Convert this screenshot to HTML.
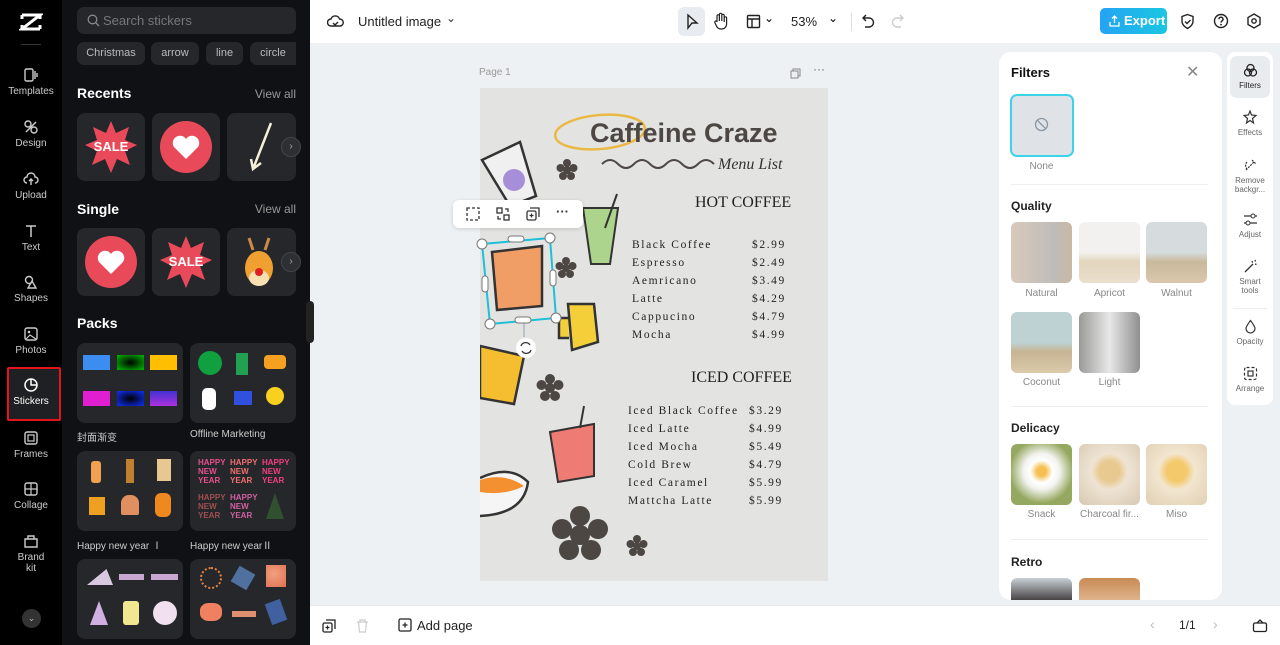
<!DOCTYPE html>
<html><head><meta charset="utf-8"><style>
*{box-sizing:border-box;margin:0;padding:0}
body{width:1280px;height:645px;overflow:hidden;font-family:"Liberation Sans","Noto Sans CJK SC",sans-serif;background:#eef1f4;position:relative}
.a{position:absolute}
.nav{left:0;top:0;width:62px;height:645px;background:#000}
.ni{position:absolute;left:0;width:62px;text-align:center;color:#ccc;font-size:10px}
.ni svg{display:block;margin:0 auto 3px}
.panel{left:62px;top:0;width:248px;height:645px;background:#101114}
.card{position:absolute;background:#26272b;border-radius:8px}
.chip{position:absolute;top:42px;height:23px;background:#26272b;border-radius:7px;color:#bbb;font-size:11px;line-height:23px;text-align:center}
.h{position:absolute;color:#fff;font-weight:bold;font-size:14px}
.va{position:absolute;right:14px;color:#999;font-size:12px}
.lbl{position:absolute;color:#ccc;font-size:10px}
.top{left:310px;top:0;width:970px;height:44px;background:#fff;border-bottom:1px solid #eee}
.bot{left:310px;top:605px;width:970px;height:40px;background:#fff;border-top:1px solid #e6e6e6}
.page{left:480px;top:88px;width:348px;height:493px;background:#e3e3e2}
.menu{position:absolute;font-family:"Liberation Serif",serif;font-size:11.5px;letter-spacing:1.6px;color:#222}
.fp{left:999px;top:52px;width:223px;height:548px;background:#fff;border-radius:12px;overflow:hidden}
.th{position:absolute;width:61px;height:61px;border-radius:6px}
.tl{position:absolute;width:61px;text-align:center;font-size:10px;color:#888}
.sec{position:absolute;left:12px;font-size:12px;font-weight:bold;color:#222}
.rt{left:1227px;top:52px;width:46px;height:353px;background:#fff;border-radius:8px}
.ri{position:absolute;left:0;width:46px;text-align:center;font-size:8px;color:#666;line-height:9px}
.ri svg{display:block;margin:0 auto 3px}
</style></head><body>

<div class="a nav">
 <svg class="a" style="left:19px;top:12px" width="24" height="20" viewBox="0 0 24 20"><path d="M3 3h18L3 17h18M3 3v4M21 3v4M3 17v-4M21 17v-4" stroke="#fff" stroke-width="3" fill="none"/></svg>
 <div class="a" style="left:21px;top:44px;width:20px;height:1px;background:#333"></div>
 <div class="ni" style="top:67px"><svg width="16" height="16" viewBox="0 0 16 16"><rect x="2" y="2" width="8" height="12" rx="1.5" stroke="#ccc" fill="none" stroke-width="1.4"/><path d="M12 4v8M14 6v4" stroke="#ccc" stroke-width="1.4"/></svg>Templates</div>
 <div class="ni" style="top:119px"><svg width="16" height="16" viewBox="0 0 16 16"><circle cx="5" cy="5" r="3" stroke="#ccc" fill="none" stroke-width="1.4"/><circle cx="11" cy="11" r="3" stroke="#ccc" fill="none" stroke-width="1.4"/><path d="M3 13L13 3" stroke="#ccc" stroke-width="1.4"/></svg>Design</div>
 <div class="ni" style="top:171px"><svg width="16" height="16" viewBox="0 0 16 16"><path d="M4 12a3 3 0 010-6 4 4 0 018 0 3 3 0 010 6M8 8v6M6 10l2-2 2 2" stroke="#ccc" fill="none" stroke-width="1.4"/></svg>Upload</div>
 <div class="ni" style="top:223px"><svg width="16" height="16" viewBox="0 0 16 16"><path d="M3 3h10M8 3v11" stroke="#ccc" stroke-width="1.5"/></svg>Text</div>
 <div class="ni" style="top:274px"><svg width="16" height="16" viewBox="0 0 16 16"><circle cx="6" cy="6" r="3.5" stroke="#ccc" fill="none" stroke-width="1.4"/><path d="M9 7l4 7H5z" stroke="#ccc" fill="none" stroke-width="1.4"/></svg>Shapes</div>
 <div class="ni" style="top:326px"><svg width="16" height="16" viewBox="0 0 16 16"><rect x="2" y="2" width="12" height="12" rx="2" stroke="#ccc" fill="none" stroke-width="1.4"/><circle cx="6" cy="6" r="1.3" fill="#ccc"/><path d="M3 13l4-4 6 4" stroke="#ccc" fill="none" stroke-width="1.2"/></svg>Photos</div>
 <div class="a" style="left:7px;top:367px;width:54px;height:54px;border:2px solid #e3151b;background:#1f2023;border-radius:2px"></div>
 <div class="ni" style="top:377px;color:#fff"><svg width="16" height="16" viewBox="0 0 16 16"><path d="M8 2a6 6 0 106 6A6 6 0 008 2zM8 2v6h6" stroke="#fff" fill="none" stroke-width="1.5"/></svg>Stickers</div>
 <div class="ni" style="top:430px"><svg width="16" height="16" viewBox="0 0 16 16"><rect x="2" y="2" width="12" height="12" rx="2" stroke="#ccc" fill="none" stroke-width="1.4"/><rect x="5" y="5" width="6" height="6" stroke="#ccc" fill="none" stroke-width="1.2"/></svg>Frames</div>
 <div class="ni" style="top:481px"><svg width="16" height="16" viewBox="0 0 16 16"><rect x="2" y="2" width="12" height="12" rx="2" stroke="#ccc" fill="none" stroke-width="1.4"/><path d="M8 2v12M2 8h12" stroke="#ccc" stroke-width="1.2"/></svg>Collage</div>
 <div class="ni" style="top:533px"><svg width="16" height="16" viewBox="0 0 16 16"><path d="M2 6h12v8H2zM5 6V3h6v3" stroke="#ccc" fill="none" stroke-width="1.4"/></svg>Brand<br>kit</div>
 <div class="a" style="left:22px;top:609px;width:19px;height:19px;border-radius:50%;background:#333;color:#bbb;font-size:9px;text-align:center;line-height:19px">⌄</div>
</div>

<div class="a panel">
 <div class="a" style="left:15px;top:7px;width:219px;height:27px;background:#26272b;border-radius:7px;color:#777;font-size:13px;line-height:27px;padding-left:26px">Search stickers
  <svg class="a" style="left:10px;top:7px" width="13" height="13" viewBox="0 0 13 13"><circle cx="5.5" cy="5.5" r="4.3" stroke="#888" fill="none" stroke-width="1.3"/><path d="M9 9l3 3" stroke="#888" stroke-width="1.3"/></svg></div>
 <div class="chip" style="left:15px;width:68px">Christmas</div>
 <div class="chip" style="left:89px;width:48px">arrow</div>
 <div class="chip" style="left:144px;width:37px">line</div>
 <div class="chip" style="left:188px;width:46px;border-radius:7px 0 0 7px">circle</div>
 <div class="h" style="left:15px;top:85px">Recents</div><div class="va" style="top:87px">View all</div>
 <div class="card" style="left:15px;top:113px;width:68px;height:68px"><svg width="68" height="68" viewBox="0 0 68 68"><polygon points="34,8 39,20 52,14 48,27 60,32 48,38 53,52 40,46 34,60 28,46 15,52 20,38 8,32 20,27 16,14 29,20" fill="#e84a5a"/><text x="34" y="38" font-family="Liberation Sans" font-weight="bold" font-size="13" fill="#fff" text-anchor="middle">SALE</text></svg></div>
 <div class="card" style="left:90px;top:113px;width:68px;height:68px"><svg width="68" height="68" viewBox="0 0 68 68"><circle cx="34" cy="34" r="26" fill="#e84a5a"/><path d="M34 46L22 34a7 7 0 0112-8 7 7 0 0112 8z" fill="#fff"/></svg></div>
 <div class="card" style="left:165px;top:113px;width:69px;height:68px"><svg width="68" height="68" viewBox="0 0 68 68"><path d="M44 10L26 56M24 46l2 10 8-6" stroke="#f3efd8" stroke-width="2.5" fill="none"/></svg></div>
 <div class="a" style="left:219px;top:137px;width:20px;height:20px;border-radius:50%;background:#2e2f33;border:1px solid #444;color:#aaa;font-size:10px;text-align:center;line-height:18px">›</div>
 <div class="h" style="left:15px;top:201px">Single</div><div class="va" style="top:202px">View all</div>
 <div class="card" style="left:15px;top:228px;width:68px;height:68px"><svg width="68" height="68" viewBox="0 0 68 68"><circle cx="34" cy="34" r="26" fill="#e84a5a"/><path d="M34 46L22 34a7 7 0 0112-8 7 7 0 0112 8z" fill="#fff"/></svg></div>
 <div class="card" style="left:90px;top:228px;width:68px;height:68px"><svg width="68" height="68" viewBox="0 0 68 68"><polygon points="34,8 39,20 52,14 48,27 60,32 48,38 53,52 40,46 34,60 28,46 15,52 20,38 8,32 20,27 16,14 29,20" fill="#e84a5a"/><text x="34" y="38" font-family="Liberation Sans" font-weight="bold" font-size="13" fill="#fff" text-anchor="middle">SALE</text></svg></div>
 <div class="card" style="left:165px;top:228px;width:69px;height:68px"><svg width="68" height="68" viewBox="0 0 68 68"><path d="M22 10l4 12M42 10l-4 12" stroke="#c98a4a" stroke-width="3"/><ellipse cx="32" cy="40" rx="14" ry="17" fill="#f0a030"/><ellipse cx="32" cy="50" rx="10" ry="8" fill="#f8dfb0"/><circle cx="32" cy="44" r="4" fill="#e02020"/></svg></div>
 <div class="a" style="left:219px;top:252px;width:20px;height:20px;border-radius:50%;background:#2e2f33;border:1px solid #444;color:#aaa;font-size:10px;text-align:center;line-height:18px">›</div>
 <div class="h" style="left:15px;top:315px">Packs</div>
 <div class="card" style="left:15px;top:343px;width:106px;height:80px">
  <div class="a" style="left:6px;top:12px;width:27px;height:15px;background:#3b8ef0"></div><div class="a" style="left:40px;top:12px;width:27px;height:15px;background:radial-gradient(#000,#0a0 90%)"></div><div class="a" style="left:73px;top:12px;width:27px;height:15px;background:#ffbf00"></div>
  <div class="a" style="left:6px;top:48px;width:27px;height:15px;background:#e020d0"></div><div class="a" style="left:40px;top:48px;width:27px;height:15px;background:radial-gradient(#000,#1030ff)"></div><div class="a" style="left:73px;top:48px;width:27px;height:15px;background:linear-gradient(#4030d0,#b030e0)"></div></div>
 <div class="card" style="left:128px;top:343px;width:106px;height:80px">
  <div class="a" style="left:8px;top:8px;width:24px;height:24px;border-radius:50%;background:#10a040"></div><div class="a" style="left:46px;top:10px;width:12px;height:22px;background:#20a050"></div><div class="a" style="left:74px;top:12px;width:22px;height:14px;background:#f5a020;border-radius:4px"></div>
  <div class="a" style="left:12px;top:45px;width:14px;height:22px;background:#fff;border-radius:5px"></div><div class="a" style="left:44px;top:48px;width:18px;height:14px;background:#3050e0"></div><div class="a" style="left:76px;top:44px;width:18px;height:18px;border-radius:50%;background:#f8d020"></div></div>
 <div class="lbl" style="left:15px;top:429px">封面渐变</div><div class="lbl" style="left:128px;top:429px">Offline Marketing</div>
 <div class="card" style="left:15px;top:451px;width:106px;height:80px">
  <div class="a" style="left:14px;top:10px;width:10px;height:22px;background:#f0a050;border-radius:3px"></div><div class="a" style="left:49px;top:8px;width:8px;height:24px;background:#c08030"></div><div class="a" style="left:80px;top:8px;width:14px;height:22px;background:#e8c890"></div>
  <div class="a" style="left:12px;top:46px;width:16px;height:18px;background:#f0a020"></div><div class="a" style="left:44px;top:44px;width:18px;height:20px;background:#e09060;border-radius:8px 8px 2px 2px"></div><div class="a" style="left:78px;top:42px;width:16px;height:24px;background:#f08820;border-radius:6px"></div></div>
 <div class="card" style="left:128px;top:451px;width:106px;height:80px;color:#e85090;font-size:8px;font-weight:bold;line-height:9px">
  <div class="a" style="left:8px;top:7px;color:#e8508f">HAPPY<br>NEW<br>YEAR</div><div class="a" style="left:40px;top:7px;color:#f07070">HAPPY<br>NEW<br>YEAR</div><div class="a" style="left:72px;top:7px;color:#f04080">HAPPY<br>NEW<br>YEAR</div>
  <div class="a" style="left:8px;top:42px;color:#a05050">HAPPY<br>NEW<br>YEAR</div><div class="a" style="left:40px;top:42px;color:#d060a0">HAPPY<br>NEW<br>YEAR</div><div class="a" style="left:76px;top:42px;width:18px;height:26px;background:#305030;clip-path:polygon(50% 0,100% 100%,0 100%)"></div></div>
 <div class="lbl" style="left:15px;top:537px">Happy new year Ⅰ</div><div class="lbl" style="left:128px;top:537px">Happy new yearⅡ</div>
 <div class="card" style="left:15px;top:559px;width:106px;height:80px">
  <div class="a" style="left:10px;top:10px;width:26px;height:16px;background:#d8c8e0;clip-path:polygon(25% 0,50% 100%,0 100%,75% 0,100% 100%,50% 100%)"></div><div class="a" style="left:42px;top:15px;width:25px;height:6px;background:#c8a8d0"></div><div class="a" style="left:74px;top:15px;width:27px;height:6px;background:#c8a8d0"></div>
  <div class="a" style="left:13px;top:42px;width:18px;height:24px;background:#d0b0e0;clip-path:polygon(50% 0,100% 100%,0 100%)"></div><div class="a" style="left:46px;top:42px;width:16px;height:24px;background:#f0e890;border-radius:3px"></div><div class="a" style="left:76px;top:42px;width:24px;height:24px;border-radius:50%;background:#f0e0f0"></div></div>
 <div class="card" style="left:128px;top:559px;width:106px;height:80px">
  <div class="a" style="left:10px;top:8px;width:22px;height:22px;border-radius:50%;border:2px dotted #f08040"></div><div class="a" style="left:44px;top:10px;width:18px;height:18px;background:#5070a0;transform:rotate(30deg)"></div><div class="a" style="left:76px;top:6px;width:20px;height:22px;background:radial-gradient(circle at 40% 40%,#f0a080,#e07050)"></div>
  <div class="a" style="left:10px;top:44px;width:22px;height:18px;background:#f08060;border-radius:40%"></div><div class="a" style="left:42px;top:52px;width:24px;height:6px;background:#e09070"></div><div class="a" style="left:78px;top:42px;width:16px;height:22px;background:#4060a0;transform:rotate(-20deg)"></div></div>
 <div class="a" style="left:244px;top:301px;width:8px;height:42px;background:#222;border-radius:4px"></div>
</div>

<div class="a top">
 <svg class="a" style="left:17px;top:13px" width="17" height="17" viewBox="0 0 17 17"><path d="M4 13a3.5 3.5 0 010-7 4.5 4.5 0 018.5 0A3.5 3.5 0 0113 13zM6 10l2 2 3-3" stroke="#222" fill="none" stroke-width="1.4"/></svg>
 <div class="a" style="left:48px;top:14px;font-size:13px;color:#222">Untitled image</div>
 <div class="a" style="left:136px;top:11px;font-size:12px;color:#333">⌄</div>
 <div class="a" style="left:368px;top:7px;width:27px;height:29px;background:#e8ebef;border-radius:6px"></div>
 <svg class="a" style="left:374px;top:13px" width="16" height="17" viewBox="0 0 16 17"><path d="M4 2l9 8h-5l-4 5z" stroke="#222" fill="none" stroke-width="1.4"/></svg>
 <svg class="a" style="left:403px;top:12px" width="16" height="18" viewBox="0 0 16 18"><path d="M4 10V4a1.2 1.2 0 012.4 0v5V2.5a1.2 1.2 0 012.4 0V9V3.5a1.2 1.2 0 012.4 0V10V6a1.2 1.2 0 012.4 0v6a5 5 0 01-5 5H8a5 5 0 01-4-2L2 11a1.2 1.2 0 012-1.5z" stroke="#222" fill="none" stroke-width="1.2"/></svg>
 <svg class="a" style="left:436px;top:14px" width="15" height="15" viewBox="0 0 15 15"><rect x="1.5" y="1.5" width="12" height="12" rx="1" stroke="#222" fill="none" stroke-width="1.4"/><path d="M1.5 5h12M6 5v8.5" stroke="#222" stroke-width="1.4"/></svg>
 <div class="a" style="left:454px;top:11px;font-size:12px">⌄</div>
 <div class="a" style="left:481px;top:14px;font-size:13px;color:#222">53%</div>
 <div class="a" style="left:518px;top:11px;font-size:12px">⌄</div>
 <div class="a" style="left:541px;top:13px;width:1px;height:18px;background:#ddd"></div>
 <svg class="a" style="left:551px;top:13px" width="14" height="16" viewBox="0 0 14 16"><path d="M5 2L2 5l3 3M2 5h6a4 4 0 010 9H4" stroke="#222" fill="none" stroke-width="1.4"/></svg>
 <svg class="a" style="left:581px;top:13px" width="14" height="16" viewBox="0 0 14 16"><path d="M9 2l3 3-3 3M12 5H6a4 4 0 000 9h4" stroke="#ccc" fill="none" stroke-width="1.4"/></svg>
 <div class="a" style="left:790px;top:8px;width:67px;height:26px;border-radius:5px;background:linear-gradient(90deg,#25a3f5,#1ac7e0);color:#fff;font-size:13px;font-weight:bold;line-height:26px;padding-left:24px">Export
  <svg class="a" style="left:9px;top:7px" width="11" height="12" viewBox="0 0 11 12"><path d="M5.5 8V1M3 3.5l2.5-2.5 2.5 2.5M1 7v4h9V7" stroke="#fff" fill="none" stroke-width="1.3"/></svg></div>
 <svg class="a" style="left:870px;top:13px" width="15" height="17" viewBox="0 0 15 17"><path d="M7.5 1.5l5.5 2v5c0 3.5-3 5.5-5.5 7-2.5-1.5-5.5-3.5-5.5-7v-5zM5 8.5l2 2 3.5-3.5" stroke="#222" fill="none" stroke-width="1.4"/></svg>
 <svg class="a" style="left:903px;top:13px" width="16" height="16" viewBox="0 0 16 16"><circle cx="8" cy="8" r="6.5" stroke="#222" fill="none" stroke-width="1.4"/><path d="M6 6.2a2 2 0 113 1.7c-.8.5-1 .9-1 1.7" stroke="#222" fill="none" stroke-width="1.4"/><circle cx="8" cy="11.6" r=".9" fill="#222"/></svg>
 <svg class="a" style="left:936px;top:13px" width="16" height="16" viewBox="0 0 16 16"><path d="M8 1l6 3.5v7L8 15l-6-3.5v-7z" stroke="#222" fill="none" stroke-width="1.4"/><circle cx="8" cy="8" r="2.2" stroke="#222" fill="none" stroke-width="1.4"/></svg>
</div>

<div class="a" style="left:479px;top:67px;font-size:10px;color:#999">Page 1</div>
<svg class="a" style="left:790px;top:68px" width="11" height="11" viewBox="0 0 11 11"><rect x="1" y="3" width="7" height="7" stroke="#888" fill="none"/><path d="M3 3V1h7v7H8" stroke="#888" fill="none"/></svg>
<div class="a" style="left:813px;top:62px;font-size:12px;color:#666">···</div>

<div class="a page">
 <svg class="a" style="left:0;top:0" width="348" height="493" viewBox="0 0 348 493">
  <ellipse cx="120" cy="44" rx="45" ry="17" stroke="#eab945" stroke-width="2.5" fill="none" transform="rotate(-5 120 44)"/>
  <text x="110" y="54" font-family="Liberation Sans" font-weight="bold" font-size="27" fill="#4d4744">Caffeine Craze</text>
  <path d="M122 76q8-8 16 0t16 0 16 0 16 0 16 0 16 0 16 0" stroke="#4d4744" stroke-width="2" fill="none"/>
  <text x="238" y="81" font-family="Liberation Serif" font-style="italic" font-size="16" fill="#333">Menu List</text>
  <text x="215" y="119" font-family="Liberation Serif" font-size="16" fill="#222">HOT COFFEE</text>
  <text x="211" y="294" font-family="Liberation Serif" font-size="16" fill="#222">ICED COFFEE</text>
  <path d="M2 72l38-18 16 54-26 10z" stroke="#333" stroke-width="2.5" fill="#f0f0f0"/>
  <circle cx="34" cy="92" r="11" fill="#a68fd8"/>
  <path d="M103 120l35 0-8 56-19 0z" stroke="#333" stroke-width="2" fill="#9fcf78" fill-opacity=".8"/>
  <path d="M125 140l12-34" stroke="#333" stroke-width="2"/>
  <path d="M12 164l50-6 0 60-45 4z" stroke="#333" stroke-width="2.5" fill="#f39050" fill-opacity=".85"/>
  <path d="M88 216h26l4 38-26 8zM88 230h-9v20h10" stroke="#333" stroke-width="2.5" fill="#f5cf3a"/>
  <path d="M0 258l44 10-10 48-34-6z" stroke="#333" stroke-width="2.5" fill="#f4be30"/>
  <path d="M70 344l44-8 0 52-36 6z" stroke="#333" stroke-width="2" fill="#ef7068" fill-opacity=".9"/>
  <path d="M100 340l4-22" stroke="#333" stroke-width="2"/>
  <path d="M0 390q30-14 48 4-4 32-48 34" stroke="#333" stroke-width="2.5" fill="#f5f5f5"/>
  <path d="M0 392q24-8 44 6-20 10-44 6z" fill="#f59030"/>
  <g fill="#4d4744">
   <g transform="translate(87 82)"><circle r="4"/><circle cy="-7" r="4"/><circle cx="6.5" cy="-2" r="4"/><circle cx="4" cy="6" r="4"/><circle cx="-4" cy="6" r="4"/><circle cx="-6.5" cy="-2" r="4"/></g>
   <g transform="translate(86 180)"><circle r="4"/><circle cy="-7" r="4"/><circle cx="6.5" cy="-2" r="4"/><circle cx="4" cy="6" r="4"/><circle cx="-4" cy="6" r="4"/><circle cx="-6.5" cy="-2" r="4"/></g>
   <g transform="translate(70 300)"><circle r="5"/><circle cy="-9" r="5"/><circle cx="8.5" cy="-3" r="5"/><circle cx="5" cy="8" r="5"/><circle cx="-5" cy="8" r="5"/><circle cx="-8.5" cy="-3" r="5"/></g>
   <g transform="translate(100 447)"><circle r="10"/><circle cy="-19" r="10"/><circle cx="18" cy="-6" r="10"/><circle cx="11" cy="15" r="10"/><circle cx="-11" cy="15" r="10"/><circle cx="-18" cy="-6" r="10"/></g>
   <g transform="translate(157 458)"><circle r="4"/><circle cy="-7" r="4"/><circle cx="6.5" cy="-2" r="4"/><circle cx="4" cy="6" r="4"/><circle cx="-4" cy="6" r="4"/><circle cx="-6.5" cy="-2" r="4"/></g>
  </g>
 </svg>
 <div class="menu" style="left:152px;top:148px;line-height:18px">Black Coffee<br>Espresso<br>Aemricano<br>Latte<br>Cappucino<br>Mocha</div>
 <div class="menu" style="left:272px;top:148px;line-height:18px">$2.99<br>$2.49<br>$3.49<br>$4.29<br>$4.79<br>$4.99</div>
 <div class="menu" style="left:148px;top:314px;line-height:18px">Iced Black Coffee<br>Iced Latte<br>Iced Mocha<br>Cold Brew<br>Iced Caramel<br>Mattcha Latte</div>
 <div class="menu" style="left:269px;top:314px;line-height:18px">$3.29<br>$4.99<br>$5.49<br>$4.79<br>$5.99<br>$5.99</div>
</div>

<!-- selection -->
<svg class="a" style="left:476px;top:232px" width="86" height="130" viewBox="0 0 86 130">
 <path d="M6 12L74 6 80 86 14 92z" stroke="#1cc0d8" stroke-width="2" fill="none"/>
 <path d="M48 91v14" stroke="#8aa"/>
 <g fill="#fff" stroke="#777"><circle cx="6" cy="12" r="5"/><circle cx="74" cy="6" r="5"/><circle cx="80" cy="86" r="5"/><circle cx="14" cy="92" r="5"/>
 <rect x="32" y="4" width="16" height="6" rx="3"/><rect x="39" y="85" width="16" height="6" rx="3"/><rect x="6" y="44" width="6" height="16" rx="3"/><rect x="74" y="38" width="6" height="16" rx="3"/></g>
 <circle cx="50" cy="116" r="10" fill="#fff"/>
 <path d="M45 114a5 5 0 019-1M55 118a5 5 0 01-9 1" stroke="#333" fill="none" stroke-width="1.3"/>
</svg>
<div class="a" style="left:453px;top:200px;width:130px;height:28px;background:#fff;border-radius:6px;box-shadow:0 1px 4px rgba(0,0,0,.15)">
 <svg class="a" style="left:13px;top:7px" width="14" height="14" viewBox="0 0 14 14"><rect x="1" y="1" width="12" height="12" stroke="#333" fill="none" stroke-dasharray="3 2" stroke-width="1.3"/></svg>
 <svg class="a" style="left:43px;top:7px" width="14" height="14" viewBox="0 0 14 14"><rect x="1" y="1" width="5" height="5" stroke="#333" fill="none" stroke-width="1.3"/><rect x="8" y="8" width="5" height="5" stroke="#333" fill="none" stroke-width="1.3"/><path d="M9 2h3v3M5 12H2V9" stroke="#333" fill="none" stroke-width="1.3"/></svg>
 <svg class="a" style="left:73px;top:7px" width="14" height="14" viewBox="0 0 14 14"><rect x="1" y="4" width="9" height="9" rx="1.5" stroke="#333" fill="none" stroke-width="1.3"/><path d="M4 1h9v9" stroke="#333" fill="none" stroke-width="1.3"/><path d="M5.5 6.5v4M3.5 8.5h4" stroke="#333" stroke-width="1.2"/></svg>
 <div class="a" style="left:103px;top:4px;font-size:13px;font-weight:bold;color:#333">···</div>
</div>

<div class="a fp">
 <div class="a" style="left:12px;top:13px;font-size:13px;font-weight:bold;color:#111">Filters</div>
 <div class="a" style="left:187px;top:10px;font-size:16px;color:#888">✕</div>
 <div class="a" style="left:11px;top:42px;width:64px;height:63px;border:2px solid #3dd3e8;border-radius:7px;background:#dfe3e8"></div>
 <svg class="a" style="left:35px;top:65px" width="15" height="15" viewBox="0 0 15 15"><circle cx="7.5" cy="7.5" r="6" stroke="#8a96a3" fill="none" stroke-width="1.3"/><path d="M3.5 3.5l8 8" stroke="#8a96a3" stroke-width="1.3"/></svg>
 <div class="tl" style="left:12px;top:109px">None</div>
 <div class="a" style="left:12px;top:132px;width:197px;height:1px;background:#eee"></div>
 <div class="sec" style="top:147px">Quality</div>
 <div class="th" style="left:12px;top:170px;background:linear-gradient(90deg,#d8cabb,#bfbcb9 70%,#cbb8a4)"></div>
 <div class="th" style="left:80px;top:170px;background:linear-gradient(#f2f1ef 50%,#e3d5bd 65%,#eadfcd)"></div>
 <div class="th" style="left:147px;top:170px;background:linear-gradient(#d6dcdd 50%,#c9b99b 65%,#d9c8ad)"></div>
 <div class="tl" style="left:12px;top:236px">Natural</div><div class="tl" style="left:80px;top:236px">Apricot</div><div class="tl" style="left:147px;top:236px">Walnut</div>
 <div class="th" style="left:12px;top:260px;background:linear-gradient(#bed2d4 50%,#c7b493 65%,#dbcbab)"></div>
 <div class="th" style="left:80px;top:260px;background:linear-gradient(90deg,#9a9a99,#e8e8e8 50%,#8f8f8f)"></div>
 <div class="tl" style="left:12px;top:325px">Coconut</div><div class="tl" style="left:80px;top:325px">Light</div>
 <div class="a" style="left:12px;top:354px;width:197px;height:1px;background:#eee"></div>
 <div class="sec" style="top:369px">Delicacy</div>
 <div class="th" style="left:12px;top:392px;background:radial-gradient(circle at 50% 45%,#f5c050 10%,#fff 25%,#f2f2ee 40%,#95a85f 70%)"></div>
 <div class="th" style="left:80px;top:392px;background:radial-gradient(circle at 50% 45%,#e8c98f 22%,#efe4d4 40%,#d6c9b2)"></div>
 <div class="th" style="left:147px;top:392px;background:radial-gradient(circle at 50% 45%,#f3c96c 22%,#f3e6d0 40%,#dfcfb2)"></div>
 <div class="tl" style="left:12px;top:457px">Snack</div><div class="tl" style="left:80px;top:457px">Charcoal fir...</div><div class="tl" style="left:147px;top:457px">Miso</div>
 <div class="a" style="left:12px;top:487px;width:197px;height:1px;background:#eee"></div>
 <div class="sec" style="top:503px">Retro</div>
 <div class="th" style="left:12px;top:526px;background:linear-gradient(#c9d0d6,#3a3535 40%,#e8d9c9 60%)"></div>
 <div class="th" style="left:80px;top:526px;background:linear-gradient(#c88a55,#e8c4a0 50%)"></div>
</div>

<div class="a rt">
 <div class="a" style="left:3px;top:4px;width:40px;height:42px;background:#e9ecef;border-radius:7px"></div>
 <div class="ri" style="top:11px;color:#222"><svg width="15" height="15" viewBox="0 0 15 15"><circle cx="7.5" cy="5" r="3.5" stroke="#222" fill="none" stroke-width="1.3"/><circle cx="5" cy="9.5" r="3.5" stroke="#222" fill="none" stroke-width="1.3"/><circle cx="10" cy="9.5" r="3.5" stroke="#222" fill="none" stroke-width="1.3"/></svg>Filters</div>
 <div class="ri" style="top:58px"><svg width="15" height="15" viewBox="0 0 15 15"><path d="M7 1l1.5 4 4.5.5-3.5 3 1 4.5L7 10.5 3.5 13l1-4.5L1 5.5 5.5 5z" stroke="#333" fill="none" stroke-width="1.2"/></svg>Effects</div>
 <div class="ri" style="top:106px"><svg width="15" height="15" viewBox="0 0 15 15"><path d="M3 12L11 4M9 2l4 4M4 4a5 5 0 000 7" stroke="#333" fill="none" stroke-width="1.2" stroke-dasharray="2 1"/></svg>Remove<br>backgr...</div>
 <div class="ri" style="top:160px"><svg width="15" height="15" viewBox="0 0 15 15"><path d="M1 4h13M1 11h13" stroke="#333" stroke-width="1.2"/><circle cx="10" cy="4" r="2" fill="#fff" stroke="#333"/><circle cx="5" cy="11" r="2" fill="#fff" stroke="#333"/></svg>Adjust</div>
 <div class="ri" style="top:207px"><svg width="15" height="15" viewBox="0 0 15 15"><path d="M2 13L10 5M9 2l.6 1.6M12 5l1.5.5M12 1l.5 1.5" stroke="#333" stroke-width="1.3"/></svg>Smart<br>tools</div>
 <div class="a" style="left:6px;top:256px;width:34px;height:1px;background:#eee"></div>
 <div class="ri" style="top:267px"><svg width="15" height="15" viewBox="0 0 15 15"><path d="M7.5 1.5C5 5 3 7.5 3 9.5a4.5 4.5 0 009 0c0-2-2-4.5-4.5-8z" stroke="#333" fill="none" stroke-width="1.2"/></svg>Opacity</div>
 <div class="ri" style="top:314px"><svg width="15" height="15" viewBox="0 0 15 15"><rect x="1.5" y="1.5" width="12" height="12" rx="2" stroke="#333" fill="none" stroke-dasharray="3 2" stroke-width="1.2"/><rect x="5" y="5" width="5" height="5" stroke="#333" fill="none" stroke-width="1.2"/></svg>Arrange</div>
</div>

<div class="a bot">
 <svg class="a" style="left:12px;top:13px" width="14" height="14" viewBox="0 0 14 14"><rect x="1" y="4" width="9" height="9" rx="1.5" stroke="#222" fill="none" stroke-width="1.3"/><path d="M4 1h9v9" stroke="#222" fill="none" stroke-width="1.3"/><path d="M5.5 6.5v4M3.5 8.5h4" stroke="#222" stroke-width="1.2"/></svg>
 <svg class="a" style="left:46px;top:13px" width="13" height="14" viewBox="0 0 13 14"><path d="M1 3h11M4 3V1h5v2M2.5 3l1 10h6l1-10" stroke="#ccc" fill="none" stroke-width="1.2"/></svg>
 <svg class="a" style="left:88px;top:12px" width="15" height="15" viewBox="0 0 15 15"><rect x="1" y="1" width="12" height="12" rx="1.5" stroke="#222" fill="none" stroke-width="1.3"/><path d="M7 4.5v5M4.5 7h5" stroke="#222" stroke-width="1.3"/></svg>
 <div class="a" style="left:107px;top:12px;font-size:13px;color:#222">Add page</div>
 <div class="a" style="left:840px;top:10px;font-size:14px;color:#bbb">‹</div>
 <div class="a" style="left:869px;top:12px;font-size:12px;color:#222">1/1</div>
 <div class="a" style="left:903px;top:10px;font-size:14px;color:#bbb">›</div>
 <svg class="a" style="left:942px;top:12px" width="16" height="15" viewBox="0 0 16 15"><rect x="1.5" y="5" width="13" height="8.5" rx="1.5" stroke="#222" fill="none" stroke-width="1.3"/><path d="M5 5L8 2l3 3" stroke="#222" fill="none" stroke-width="1.3"/></svg>
</div>
</body></html>
